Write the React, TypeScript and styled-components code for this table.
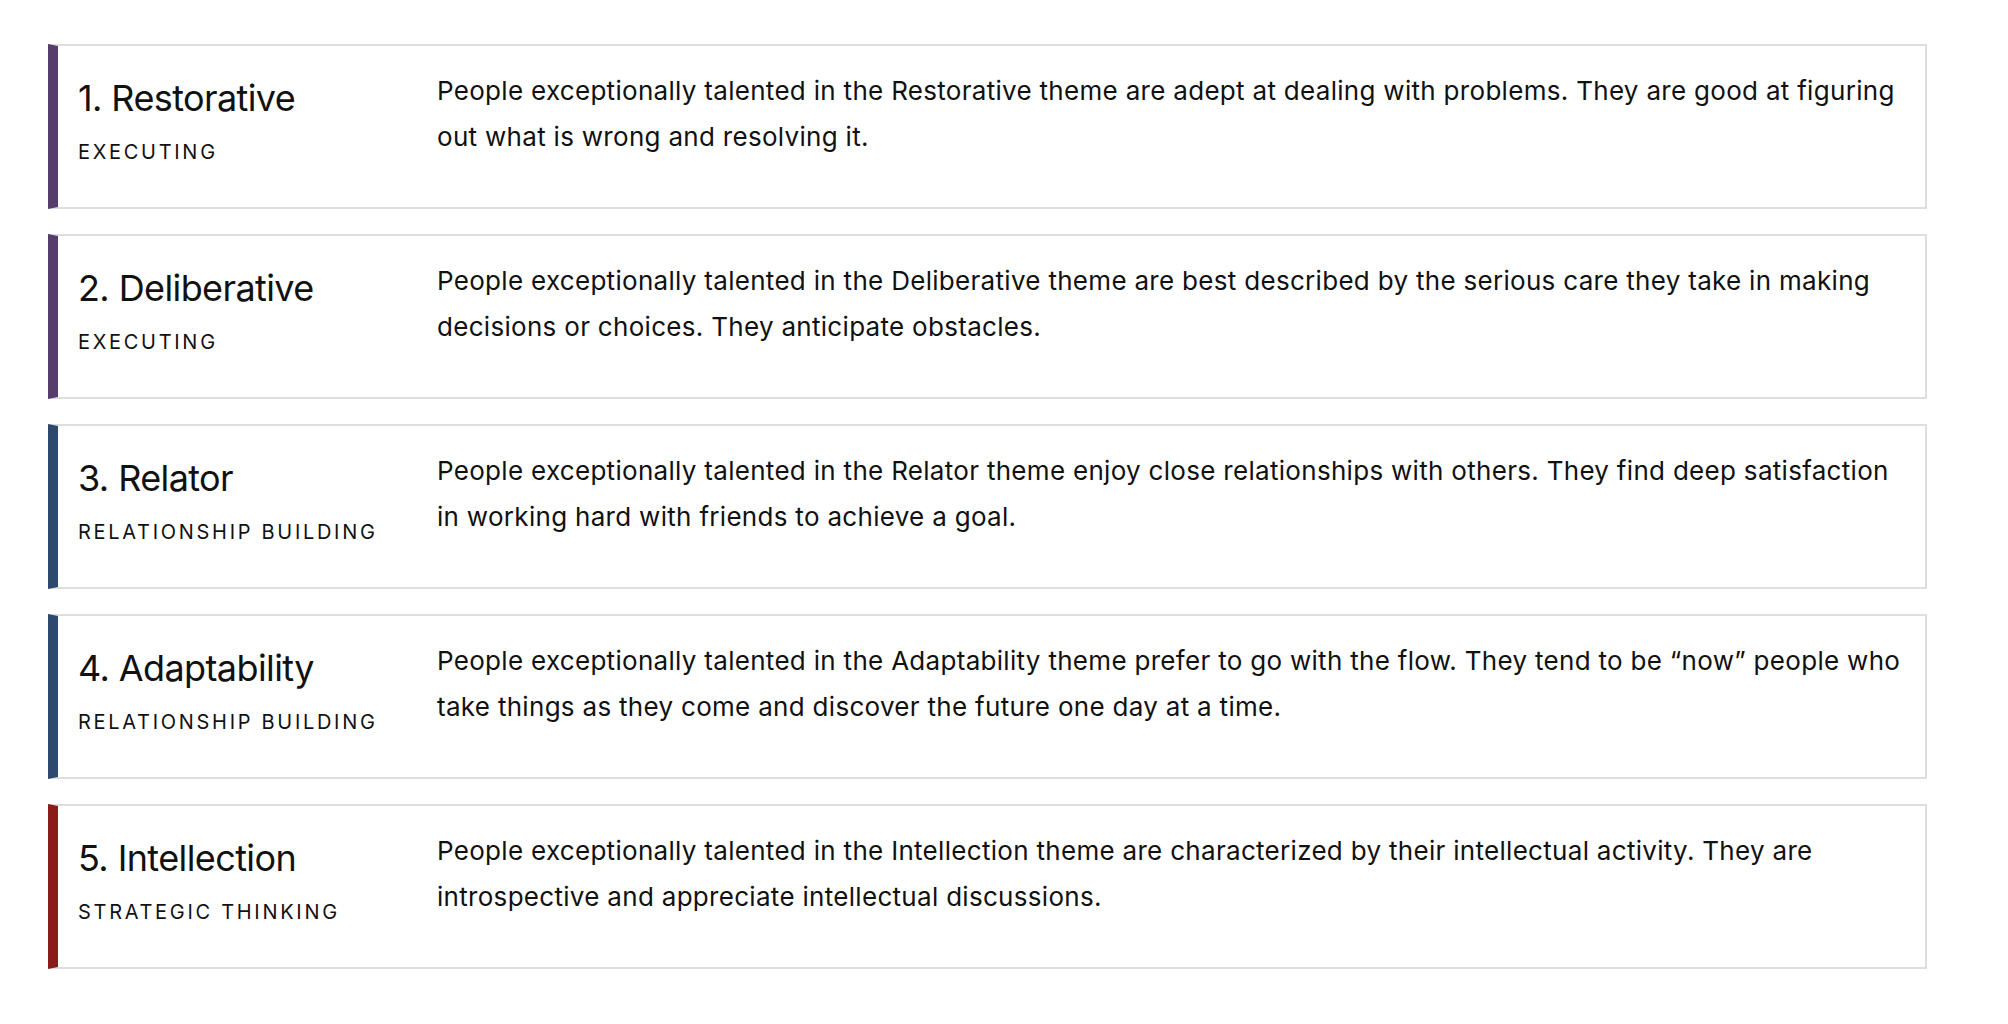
import React from 'react';
import styled, { createGlobalStyle } from 'styled-components';

const GlobalStyle = createGlobalStyle`
  html, body {
    margin: 0;
    padding: 0;
    background: #ffffff;
  }
  body {
    font-family: 'Inter', 'Liberation Sans', sans-serif;
    color: #111111;
  }
`;

const List = styled.div`
  width: 1879px;
  margin: 0 0 0 48px;
  padding-top: 44px;
  display: flex;
  flex-direction: column;
  gap: 25px;
`;

const Card = styled.div<{ $accent: string }>`
  display: flex;
  height: 165px;
  box-sizing: border-box;
  border: 2px solid #dedede;
  border-left: 10px solid ${(p) => p.$accent};
  background: #ffffff;
`;

const Heading = styled.div`
  width: 379px;
  flex-shrink: 0;
  padding: 31px 0 0 20px;
  box-sizing: border-box;
`;

const Title = styled.div`
  font-size: 36px;
  line-height: 42px;
  font-weight: 400;
  letter-spacing: -0.6px;
  color: #111111;
`;

const Domain = styled.div`
  margin-top: 21px;
  font-size: 20px;
  line-height: 24px;
  letter-spacing: 2.7px;
  text-transform: uppercase;
  color: #111111;
`;

const Description = styled.p`
  flex: 1;
  margin: 0;
  padding: 22px 16px 0 0;
  font-size: 26px;
  line-height: 46px;
  letter-spacing: 0.3px;
  color: #111111;
`;

type Strength = {
  rank: number;
  name: string;
  domain: string;
  accent: string;
  text: string;
};

const EXECUTING = '#563d6b';
const RELATIONSHIP = '#2d4a6e';
const STRATEGIC = '#8a1d1a';

const strengths: Strength[] = [
  {
    rank: 1,
    name: 'Restorative',
    domain: 'Executing',
    accent: EXECUTING,
    text: 'People exceptionally talented in the Restorative theme are adept at dealing with problems. They are good at figuring out what is wrong and resolving it.',
  },
  {
    rank: 2,
    name: 'Deliberative',
    domain: 'Executing',
    accent: EXECUTING,
    text: 'People exceptionally talented in the Deliberative theme are best described by the serious care they take in making decisions or choices. They anticipate obstacles.',
  },
  {
    rank: 3,
    name: 'Relator',
    domain: 'Relationship Building',
    accent: RELATIONSHIP,
    text: 'People exceptionally talented in the Relator theme enjoy close relationships with others. They find deep satisfaction in working hard with friends to achieve a goal.',
  },
  {
    rank: 4,
    name: 'Adaptability',
    domain: 'Relationship Building',
    accent: RELATIONSHIP,
    text: 'People exceptionally talented in the Adaptability theme prefer to go with the flow. They tend to be \u201cnow\u201d people who take things as they come and discover the future one day at a time.',
  },
  {
    rank: 5,
    name: 'Intellection',
    domain: 'Strategic Thinking',
    accent: STRATEGIC,
    text: 'People exceptionally talented in the Intellection theme are characterized by their intellectual activity. They are introspective and appreciate intellectual discussions.',
  },
];

export default function App() {
  return (
    <>
      <GlobalStyle />
      <List>
        {strengths.map((s) => (
          <Card key={s.rank} $accent={s.accent}>
            <Heading>
              <Title>
                {s.rank}. {s.name}
              </Title>
              <Domain>{s.domain}</Domain>
            </Heading>
            <Description>{s.text}</Description>
          </Card>
        ))}
      </List>
    </>
  );
}
